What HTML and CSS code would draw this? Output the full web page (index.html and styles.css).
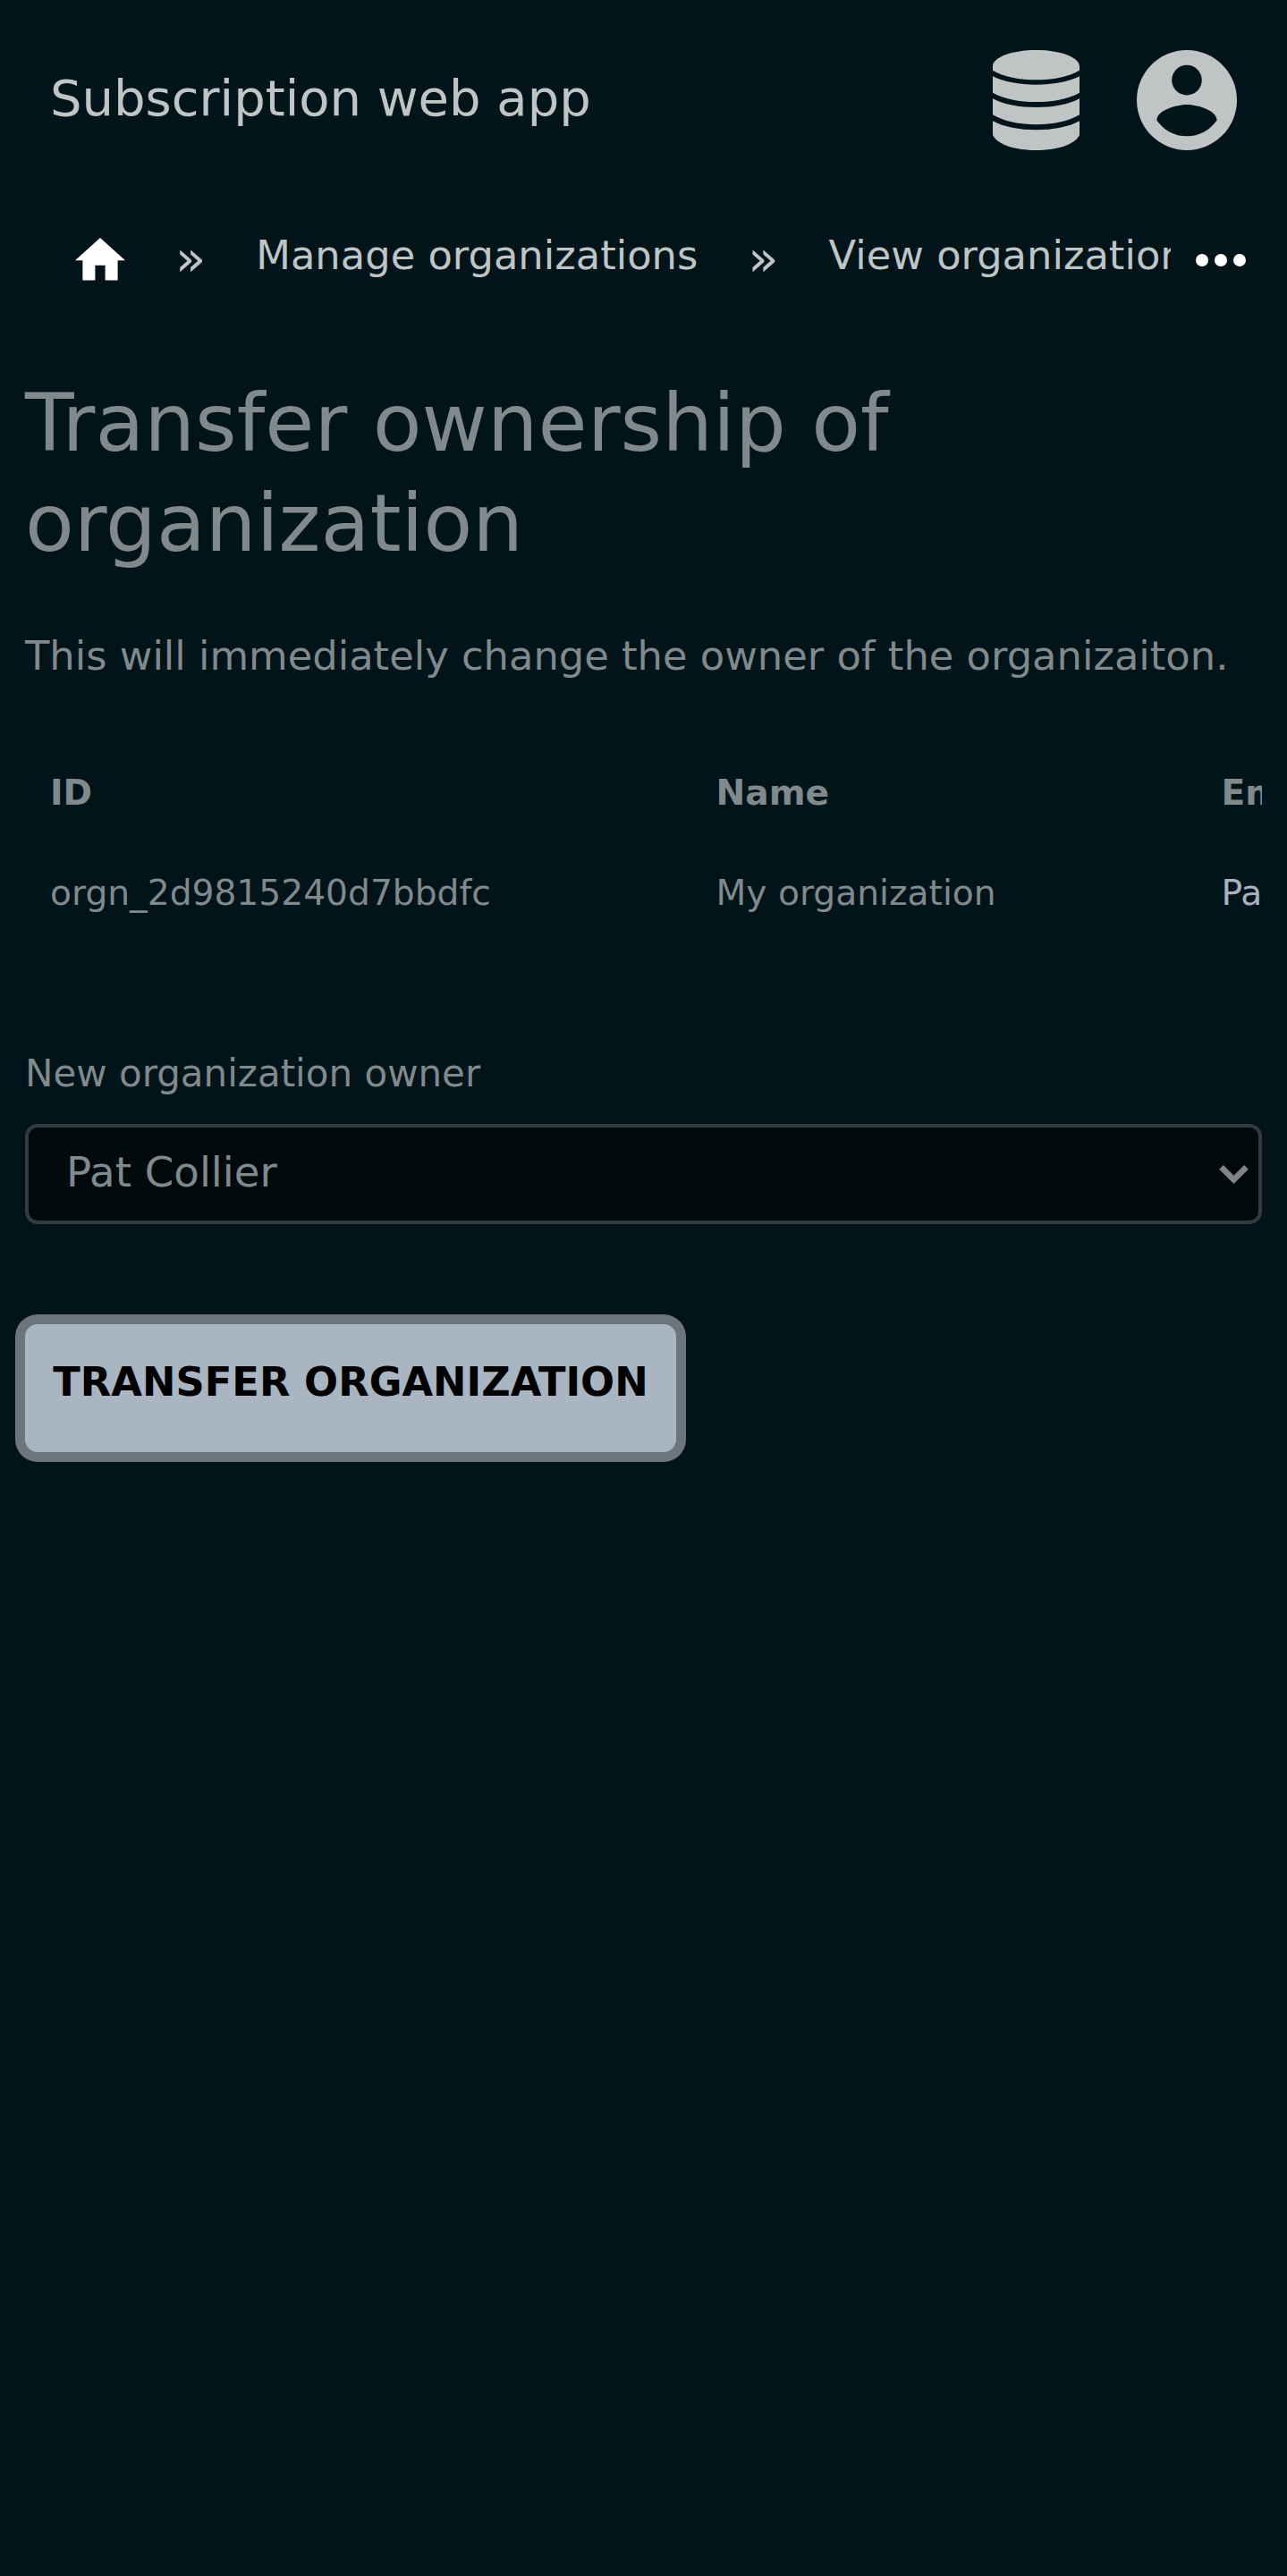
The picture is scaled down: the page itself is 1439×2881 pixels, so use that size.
FILE: index.html
```html
<!DOCTYPE html>
<html lang="en">
<head>
<meta charset="utf-8">
<title>Transfer ownership of organization</title>
<link rel="stylesheet" href="styles.css">
</head>
<body>
<header class="header">
  <a class="title">Subscription web app</a>
  <nav class="menus">
    <svg class="icon-db" viewBox="90 77 291 336"><path d="M90 131C90 101 155 77 235.500 77S381 101 381 131V145C310 187.500 161 187.500 90 145ZM90 165C161 202.500 310 202.500 381 165V220C310 261.500 161 261.500 90 220ZM90 240C161 279 310 279 381 240V294C310 338 161 338 90 294ZM90 315C161 355 310 355 381 315V362C365 395 305 413 235.500 413S106 395 90 362Z"/></svg>
    <svg class="icon-user" viewBox="2 2 20 20"><path d="M12 19.200C9.500 19.200 7.290 17.920 6 16C6.030 14 10 12.900 12 12.900S17.970 14 18 16C16.710 17.920 14.500 19.200 12 19.200M12 5A3 3 0 0 1 15 8A3 3 0 0 1 12 11A3 3 0 0 1 9 8A3 3 0 0 1 12 5M12 2A10 10 0 0 0 2 12A10 10 0 0 0 12 22A10 10 0 0 0 22 12A10 10 0 0 0 12 2Z"/></svg>
  </nav>
</header>
<nav class="crumbs">
  <div class="trail">
    <svg class="icon-home" viewBox="2 3 20 17"><path d="M10 20V14H14V20H19V12H22L12 3L2 12H5V20Z"/></svg>
    <span class="sep">»</span>
    <a class="crumb">Manage organizations</a>
    <span class="sep">»</span>
    <a class="crumb">View organization</a>
  </div>
  <svg class="icon-more" viewBox="0 0 16 4"><circle cx="2" cy="2" r="2"/><circle cx="8" cy="2" r="2"/><circle cx="14" cy="2" r="2"/></svg>
</nav>
<main class="content">
  <h1 class="heading">Transfer ownership of organization</h1>
  <p class="intro">This will immediately change the owner of the organizaiton.</p>
  <div class="table-wrap">
    <table class="table">
      <thead><tr><th class="col-id">ID</th><th class="col-name">Name</th><th class="col-email">Email</th></tr></thead>
      <tbody><tr><td>orgn_2d9815240d7bbdfc</td><td>My organization</td><td><a class="link">Pat Collier</a></td></tr></tbody>
    </table>
  </div>
  <form class="form">
    <label class="label">New organization owner</label>
    <div class="select">
      <span>Pat Collier</span>
      <svg class="icon-chevron" viewBox="0 0 98 63"><path d="M14 0L49 35L84 0L98 14L49 63L0 14Z"/></svg>
    </div>
    <button class="button" type="button">TRANSFER ORGANIZATION</button>
  </form>
</main>
</body>
</html>
```
FILE: styles.css
```css
* { box-sizing: border-box; }
body {
  margin: 0;
  min-height: 2881px;
  background: #001419;
  color: #80898b;
  font-family: "DejaVu Sans", sans-serif;
  font-size: 56px;
  overflow-x: hidden;
}
svg { display: block; flex: none; }
.header {
  display: flex;
  justify-content: space-between;
  height: 224px;
  padding: 56px 56px 0;
  color: #bfc4c5;
}
.title { line-height: 108px; }
.menus { display: flex; gap: 64px; fill: #bfc4c5; }
.icon-db { width: 97px; height: 112px; }
.icon-user { width: 112px; height: 112px; }
.crumbs {
  display: flex;
  height: 140px;
  padding-left: 84px;
  color: #bfc4c5;
}
.trail {
  display: flex;
  width: 1225px;
  overflow: hidden;
  white-space: nowrap;
}
.icon-home { width: 56px; height: 47.6px; margin-top: 42.4px; fill: #fff; }
.sep { margin: 0 56px; line-height: 129px; }
.crumb { font-size: 44.8px; line-height: 123px; }
.icon-more { width: 56px; height: 14px; margin: 59.5px 0 0 28px; fill: #fff; }
.content { padding: 53px 28px 0; }
.heading {
  margin: 0;
  font-size: 89.6px;
  font-weight: 400;
  line-height: 112px;
}
.intro { margin: 51px 0 0; font-size: 44.8px; line-height: 83px; white-space: nowrap; }
.table-wrap { margin-top: 55.5px; overflow: hidden; }
.table {
  width: 1900px;
  table-layout: fixed;
  border-collapse: collapse;
  font-size: 39.2px;
  line-height: 56px;
  text-align: left;
}
.table th, .table td { padding: 28px; }
.col-id { width: 744.5px; }
.col-name { width: 565px; }
.link { color: #a8b3c1; }
.form { margin-top: 118px; }
.label { display: block; font-size: 42px; line-height: 56px; }
.select {
  display: flex;
  align-items: center;
  justify-content: space-between;
  height: 112px;
  margin-top: 28px;
  padding: 0 11px 3px 42px;
  border: 4px solid #343a40;
  border-radius: 14px;
  background: #00090b;
  font-size: 46.67px;
}
.icon-chevron { width: 33px; height: 21px; margin-top: 5px; fill: #808485; }
.button {
  display: block;
  width: 728px;
  height: 143.5px;
  margin: 112px 0 0;
  padding: 0 0 14px;
  border: 0;
  border-radius: 14px;
  box-shadow: 0 0 0 11px #6c757d;
  background: #a9b5c1;
  color: #000;
  font: 700 44.8px "DejaVu Sans", sans-serif;
}
```
